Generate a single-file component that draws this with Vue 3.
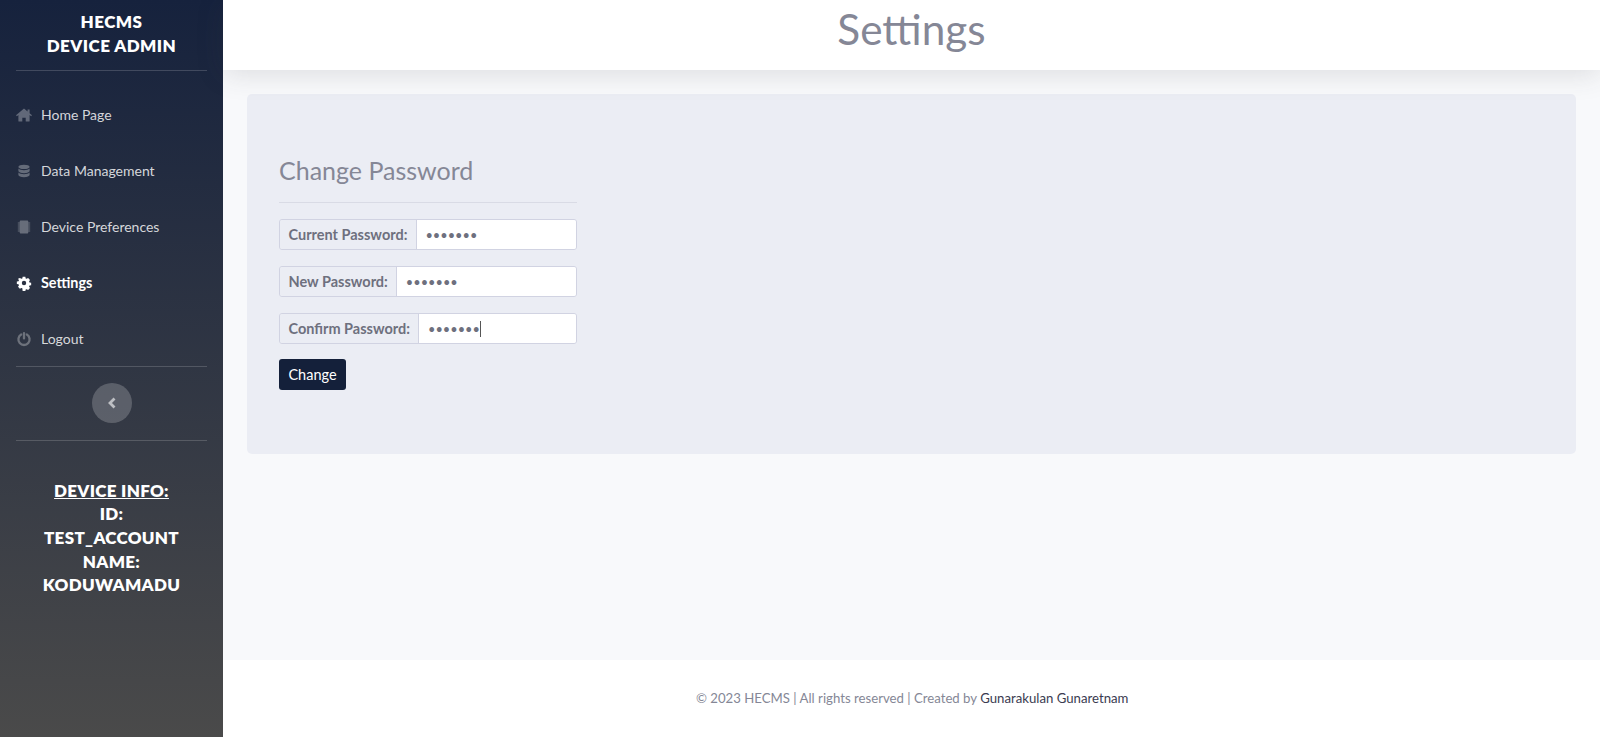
<script setup>
const navItems = [
  { label: 'Home Page', icon: 'home', box: '0 0 16 16' },
  { label: 'Data Management', icon: 'db', box: '-1 -1 18 18' },
  { label: 'Device Preferences', icon: 'chip', box: '-1 -1 18 18' },
  { label: 'Settings', icon: 'gear', box: '-1.5 -1.5 19 19', active: true },
  { label: 'Logout', icon: 'power', box: '-1 -1 18 18' },
]
const fields = [
  { label: 'Current Password:' },
  { label: 'New Password:' },
  { label: 'Confirm Password:', caret: true },
]
</script>

<template>
  <div class="page">
    <aside class="sidebar">
      <div class="brand">HECMS<br />DEVICE ADMIN</div>
      <hr class="rule rule-top" />
      <nav class="nav">
        <a v-for="item in navItems" :key="item.label" class="nav-item" :class="{ active: item.active }">
          <svg class="icon" :viewBox="item.box" fill="currentColor">
            <path v-if="item.icon === 'home'" d="M8 1.500 0 8.200l.9 1.100L2.400 8.100V14a.6.6 0 0 0 .6.600h3.300v-3.800h3.400v3.800H13a.6.6 0 0 0 .6-.6V8.100l1.500 1.200.9-1.100-2.400-2V2.500h-2v2z" />
            <g v-else-if="item.icon === 'db'">
              <path d="M8 1c3.600 0 6.300 1 6.300 2.400S11.600 5.800 8 5.800 1.700 4.800 1.700 3.400 4.400 1 8 1z" />
              <path d="M1.700 5.300C2.800 6.500 5.300 7.100 8 7.100s5.200-.6 6.300-1.800v2.700c0 1.400-2.700 2.400-6.300 2.400S1.700 9.400 1.700 8z" />
              <path d="M1.700 9.800c1.100 1.200 3.600 1.800 6.300 1.800s5.200-.6 6.300-1.800v2.800c0 1.400-2.700 2.400-6.300 2.400s-6.300-1-6.300-2.400z" />
            </g>
            <path v-else-if="item.icon === 'chip'" d="M4.200.8h7.600a1 1 0 0 1 1 1V3H15v1h-2.200v1.300H15v1h-2.200v1.200H15v1h-2.200v1.200H15v1h-2.200V12H15v1h-2.200v1.200a1 1 0 0 1-1 1H4.200a1 1 0 0 1-1-1V13H1v-1h2.200v-1.300H1v-1h2.200V8.500H1v-1h2.200V6.300H1v-1h2.200V4H1V3h2.200V1.800a1 1 0 0 1 1-1z" />
            <path v-else-if="item.icon === 'gear'" fill-rule="evenodd" d="M6.400.6h3.200l.4 2 1.100.5 1.800-1 2.200 2.300-1.100 1.700.5 1.200 2 .4v3l-2 .4-.5 1.200 1.100 1.700-2.200 2.300-1.800-1-1.100.5-.4 1.900H6.400L6 14.300l-1.100-.5-1.800 1L.900 12.500 2 10.800l-.5-1.200-2-.4v-3l2-.4L2 4.600.9 2.900 3.100 2.100l1.800 1L6 2.600zM8 5.400a2.600 2.600 0 1 0 0 5.200 2.600 2.600 0 0 0 0-5.200z" />
            <g v-else fill="none" stroke="currentColor" stroke-width="2.600" stroke-linecap="round">
              <path d="M4.800 3a6.300 6.300 0 1 0 6.400 0" />
              <path d="M8 1.400v6" />
            </g>
          </svg>
          <span>{{ item.label }}</span>
        </a>
      </nav>
      <hr class="rule" />
      <div class="toggle-row">
        <button class="toggle" type="button" aria-label="Collapse">
          <svg viewBox="0 0 10 12" width="10" height="12" fill="none" stroke="currentColor" stroke-width="2.800">
            <path d="M7.500 1.500 3 6l4.500 4.500" />
          </svg>
        </button>
      </div>
      <hr class="rule" />
      <div class="device">
        <u>DEVICE INFO:</u><br />ID:<br />TEST_ACCOUNT<br />NAME:<br />KODUWAMADU
      </div>
    </aside>

    <div class="body">
      <header class="topbar"><h1>Settings</h1></header>
      <main class="main">
        <section class="card">
          <form class="form" @submit.prevent>
            <h2>Change Password</h2>
            <hr class="form-rule" />
            <div v-for="f in fields" :key="f.label" class="group">
              <label>{{ f.label }}</label>
              <div class="field">
                <span class="dots">•••••••</span><span v-if="f.caret" class="caret"></span>
              </div>
            </div>
            <button class="submit" type="submit">Change</button>
          </form>
        </section>
      </main>
      <footer class="footer">
        © 2023 HECMS | All rights reserved | Created by <a>Gunarakulan Gunaretnam</a>
      </footer>
    </div>
  </div>
</template>

<style>
html, body { margin: 0; }
</style>

<style scoped>
.page {
  display: flex;
  height: 737px;
  overflow: hidden;
  font-family: "Lato", "Noto Sans", sans-serif;
  background: #f8f9fb;
}
.sidebar {
  width: 223px;
  flex: none;
  box-sizing: border-box;
  padding: 10px 16px 0;
  background: linear-gradient(180deg, #16223d 0%, #4a4a4a 100%);
  color: #fff;
  display: flex;
  flex-direction: column;
}
.brand {
  text-align: center;
  font-size: 17px;
  font-weight: 800;
  line-height: 24px;
  letter-spacing: .45px;
}
.rule {
  width: 100%;
  margin: 0;
  border: 0;
  border-top: 1px solid rgba(255, 255, 255, .17);
}
.rule-top { margin-top: 12px; }
.nav {
  display: flex;
  flex-direction: column;
  padding-top: 16.500px;
}
.nav-item {
  height: 55.800px;
  display: flex;
  align-items: center;
  gap: 9px;
  font-size: 14px;
  color: rgba(255, 255, 255, .82);
}
.nav-item span { position: relative; top: -.5px; }
.nav-item.active { color: #fff; font-weight: 700; font-size: 14.400px; }
.icon {
  width: 16px;
  height: 16px;
  flex: none;
  color: rgba(255, 255, 255, .3);
}
.active .icon { color: #fff; }
.toggle-row {
  height: 73px;
  box-sizing: border-box;
  padding-bottom: 2px;
  display: flex;
  align-items: center;
  justify-content: center;
}
.toggle {
  width: 40px;
  height: 40px;
  padding: 0;
  border: 0;
  border-radius: 50%;
  background: rgba(255, 255, 255, .2);
  color: rgba(255, 255, 255, .6);
  display: flex;
  align-items: center;
  justify-content: center;
}
.device {
  padding-top: 37.200px;
  text-align: center;
  font-size: 17px;
  font-weight: 800;
  line-height: 23.700px;
  letter-spacing: .3px;
}
.body {
  flex: 1;
  min-width: 0;
  display: flex;
  flex-direction: column;
}
.topbar {
  height: 70px;
  flex: none;
  background: #fff;
  box-shadow: 0 4px 28px rgba(58, 59, 69, .15);
  position: relative;
  text-align: center;
}
.topbar h1 {
  margin: 0;
  font-size: 42.300px;
  font-weight: 400;
  line-height: 58px;
  color: #858796;
}
.main {
  flex: 1;
  padding: 24px 24px 0;
}
.card {
  height: 360px;
  box-sizing: border-box;
  padding: 62px 32px 0;
  background: #ebedf4;
  border-radius: 5px;
}
.form { width: 298px; }
h2 {
  margin: 0;
  font-size: 25px;
  font-weight: 400;
  line-height: 29px;
  color: #858796;
}
.form-rule {
  margin: 17px 0 16px;
  border: 0;
  border-top: 1px solid #d9dbe5;
}
.group {
  display: flex;
  height: 31px;
  margin-bottom: 16px;
  box-sizing: border-box;
  border: 1px solid #d1d3e2;
  border-radius: 3px;
  font-size: 14.500px;
  color: #6e707e;
  overflow: hidden;
}
.group:nth-of-type(3) { margin-bottom: 15px; }
.group label {
  display: flex;
  align-items: center;
  padding: 0 8.500px;
  background: #ebedf4;
  border-right: 1px solid #d1d3e2;
  font-weight: 700;
}
.field {
  flex: 1;
  display: flex;
  align-items: center;
  padding-left: 8.500px;
  background: #fff;
}
.dots { font-size: 12.800px; }
.caret {
  width: 1px;
  height: 16px;
  background: #555;
}
.submit {
  display: block;
  height: 31px;
  width: 67px;
  padding: 0;
  border: 0;
  border-radius: 3px;
  background: #14203a;
  color: #fff;
  font: inherit;
  font-size: 14.500px;
}
.footer {
  height: 77px;
  box-sizing: border-box;
  padding: 0 2px 2px 0;
  flex: none;
  background: #fff;
  display: flex;
  align-items: center;
  justify-content: center;
  white-space: pre-wrap;
  font-size: 13.200px;
  color: #858796;
}
.footer a { color: #3a3b50; }
</style>
